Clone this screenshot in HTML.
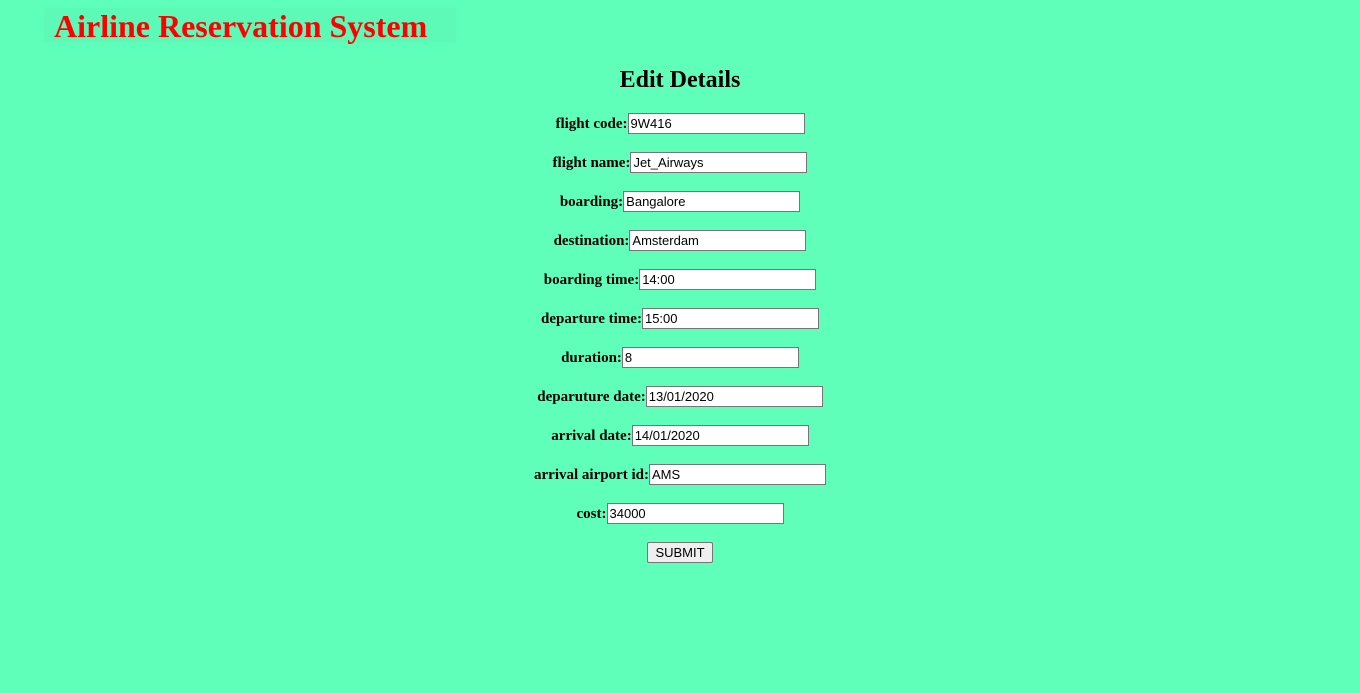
<!DOCTYPE html>
<html><head><style>
body{margin:0;background:#5fffba;width:1360px;height:693px;overflow:hidden;font-family:"Liberation Serif",serif;position:relative}
.t{position:absolute;left:44px;top:8px;width:412px;height:34px;background:#5df9b7;box-shadow:0 0 6px #5df9b7}
.t span{position:absolute;left:10px;top:0px;font-size:32px;font-weight:bold;color:#ff0000;white-space:nowrap}
h2{position:absolute;top:67px;left:0;width:1360px;text-align:center;margin:0;font-size:24px;font-weight:bold}
.r{position:absolute;left:0;width:1360px;text-align:center;font-size:15px;font-weight:bold;height:21px;line-height:22px}
.r input{width:171px;height:19px;border:1px solid #767676;padding:0 2px;margin:0;font:13px "Liberation Sans",sans-serif;vertical-align:top;box-sizing:content-box;background:#fff;color:#000}
button{position:absolute;left:647px;top:542px;width:66px;height:21px;font:13px "Liberation Sans",sans-serif;background:#efefef;border:1px solid #767676;border-radius:2px;padding:0}
</style></head><body>
<div class="t"><span>Airline Reservation System</span></div>
<h2>Edit Details</h2>
<div class="r" style="top:113px">flight code:<input value="9W416"></div>
<div class="r" style="top:152px">flight name:<input value="Jet_Airways"></div>
<div class="r" style="top:191px">boarding:<input value="Bangalore"></div>
<div class="r" style="top:230px">destination:<input value="Amsterdam"></div>
<div class="r" style="top:269px">boarding time:<input value="14:00"></div>
<div class="r" style="top:308px">departure time:<input value="15:00"></div>
<div class="r" style="top:347px">duration:<input value="8"></div>
<div class="r" style="top:386px">deparuture date:<input value="13/01/2020"></div>
<div class="r" style="top:425px">arrival date:<input value="14/01/2020"></div>
<div class="r" style="top:464px">arrival airport id:<input value="AMS"></div>
<div class="r" style="top:503px">cost:<input value="34000"></div>
<button>SUBMIT</button>
</body></html>
